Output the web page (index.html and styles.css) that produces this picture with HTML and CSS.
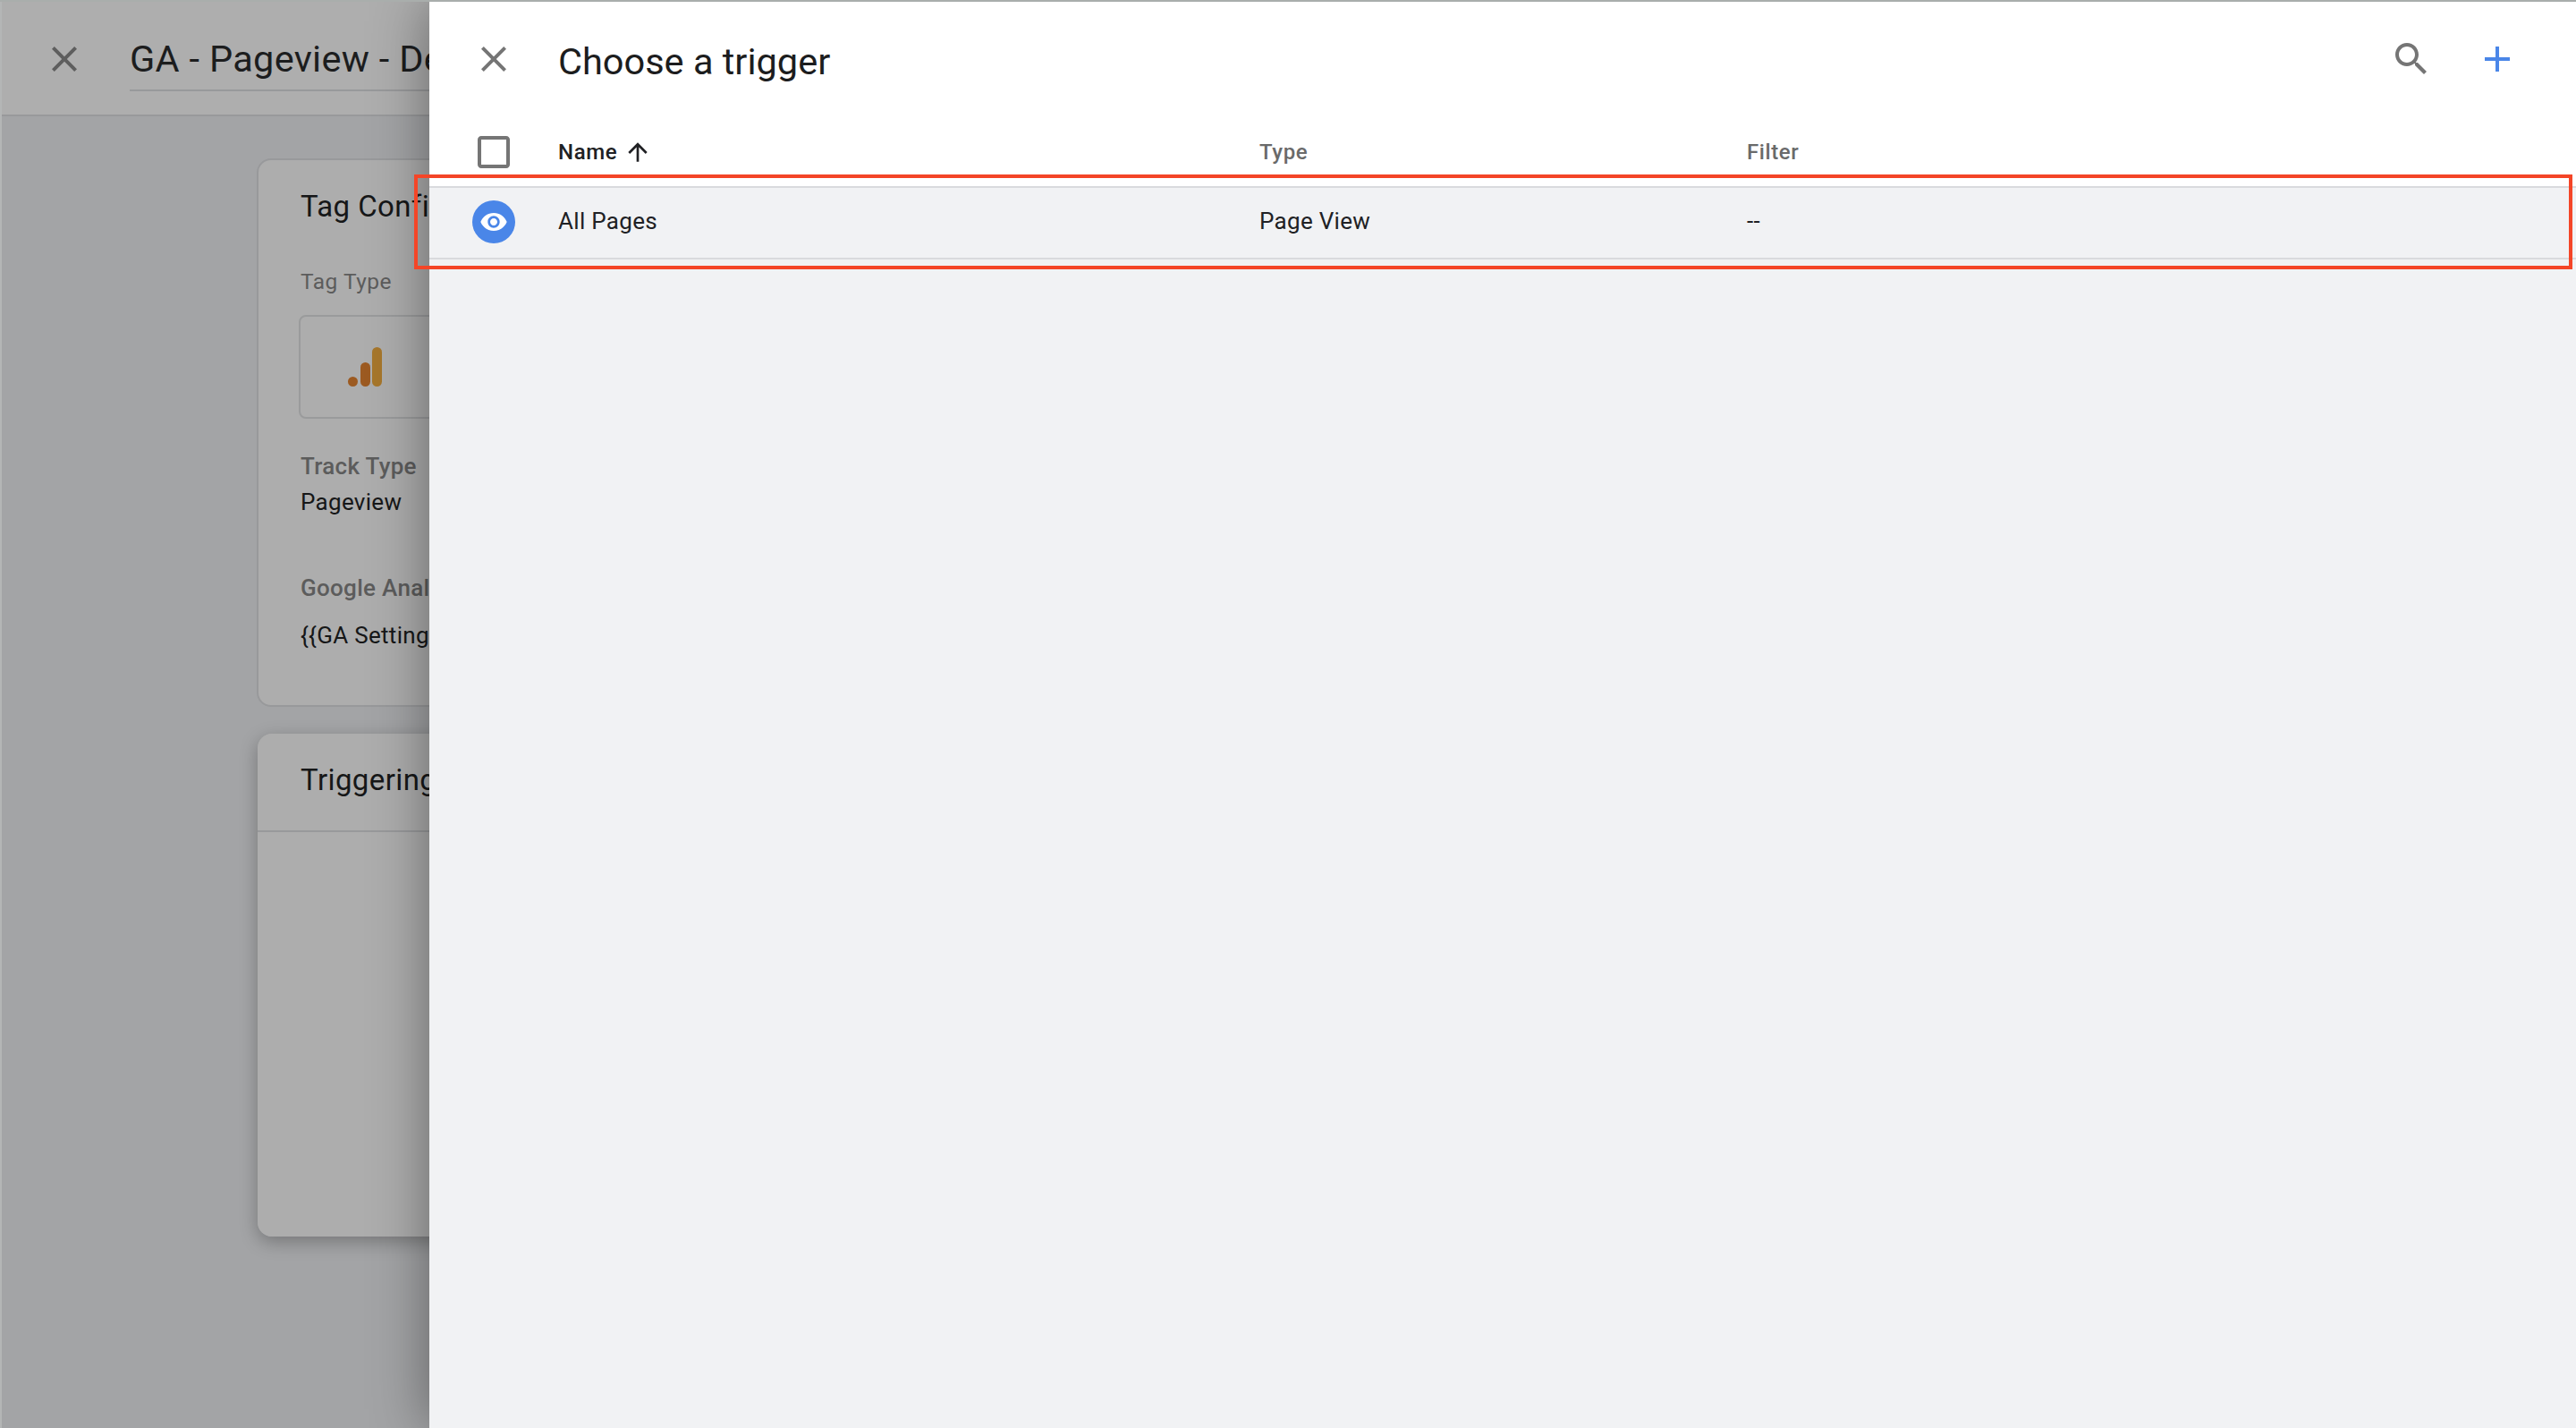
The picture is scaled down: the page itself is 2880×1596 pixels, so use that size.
FILE: index.html
```html
<!DOCTYPE html>
<html lang="en">
<head>
<meta charset="utf-8">
<title>Choose a trigger</title>
<link rel="stylesheet" href="styles.css">
</head>
<body>
<div class="page">
  <header class="page-head">
    <button class="icon-btn dark"><svg viewBox="0 0 24 24"><path d="M19 6.41L17.59 5 12 10.59 6.41 5 5 6.41 10.59 12 5 17.59 6.41 19 12 13.41 17.59 19 19 17.59 13.41 12z"/></svg></button>
    <div class="tag-name">GA - Pageview - Default</div>
  </header>
  <main class="page-main">
    <section class="card config">
      <h2 class="card-title">Tag Configuration</h2>
      <div class="label type-label">Tag Type</div>
      <div class="type-box">
        <svg class="ga-logo" viewBox="0 0 38 44"><circle cx="5.5" cy="38.5" r="5.5" fill="#9c5a21"/><rect x="14" y="17" width="11" height="27" rx="5.5" fill="#9c5a21"/><rect x="27" y="0" width="11" height="44" rx="5.5" fill="#a6762b"/></svg>
      </div>
      <div class="label track-label">Track Type</div>
      <div class="value track-value">Pageview</div>
      <div class="label settings-label">Google Analytics Settings</div>
      <div class="value settings-value">{{GA Settings}}</div>
    </section>
    <section class="card trigger">
      <h2 class="card-title">Triggering</h2>
    </section>
  </main>
</div>
<aside class="panel">
  <div class="panel-head">
    <button class="icon-btn"><svg viewBox="0 0 24 24"><path d="M19 6.41L17.59 5 12 10.59 6.41 5 5 6.41 10.59 12 5 17.59 6.41 19 12 13.41 17.59 19 19 17.59 13.41 12z"/></svg></button>
    <h1 class="panel-title">Choose a trigger</h1>
    <button class="icon-btn"><svg viewBox="0 0 24 24"><path d="M15.5 14h-.79l-.28-.27C15.41 12.59 16 11.11 16 9.5 16 5.91 13.09 3 9.5 3S3 5.91 3 9.5 5.91 16 9.5 16c1.61 0 3.09-.59 4.23-1.57l.27.28v.79l5 4.99L20.49 19l-4.99-5zm-6 0C7.01 14 5 11.99 5 9.5S7.01 5 9.5 5 14 7.01 14 9.5 11.99 14 9.5 14z"/></svg></button>
    <button class="icon-btn blue"><svg viewBox="0 0 24 24"><path d="M19 13h-6v6h-2v-6H5v-2h6V5h2v6h6v2z"/></svg></button>
  </div>
  <div class="table-row table-head">
    <svg class="check" viewBox="0 0 24 24"><path d="M19 5v14H5V5h14m0-2H5c-1.1 0-2 .9-2 2v14c0 1.1.9 2 2 2h14c1.1 0 2-.9 2-2V5c0-1.1-.9-2-2-2z"/></svg>
    <div class="th sorted">Name <svg class="arrow" viewBox="0 0 24 24"><path d="M4 12l1.41 1.41L11 7.83V20h2V7.83l5.58 5.59L20 12l-8-8-8 8z"/></svg></div>
    <div class="th">Type</div>
    <div class="th">Filter</div>
  </div>
  <div class="table-row table-item">
    <span class="eye"><svg viewBox="0 0 24 24"><path d="M12 4.5C7 4.5 2.73 7.61 1 12c1.73 4.39 6 7.5 11 7.5s9.27-3.11 11-7.5c-1.73-4.39-6-7.5-11-7.5zM12 17c-2.76 0-5-2.24-5-5s2.24-5 5-5 5 2.24 5 5-2.24 5-5 5zm0-8c-1.66 0-3 1.34-3 3s1.34 3 3 3 3-1.34 3-3-1.34-3-3-3z"/></svg></span>
    <div class="td td-name">All Pages</div>
    <div class="td">Page View</div>
    <div class="td">--</div>
  </div>
  <div class="panel-rest"></div>
</aside>
<div class="top-strip"></div>
<div class="highlight"></div>
</body>
</html>
```
FILE: styles.css
```css
* { box-sizing: border-box; }
html, body { height: 100%; }
body {
  margin: 0;
  position: relative;
  height: 1596px;
  overflow: hidden;
  background: #a9aeac;
  padding-top: 2px;
  font-family: Roboto, "Liberation Sans", sans-serif;
  color: #161718;
}
button { border: 0; padding: 0; background: none; }
h1, h2 { margin: 0; font-weight: 400; }

.top-strip {
  position: absolute;
  left: 0;
  top: 0;
  right: 0;
  height: 2px;
  background: #a9aeac;
}

.icon-btn { width: 48px; height: 48px; flex: none; fill: #757575; }
.icon-btn svg { display: block; width: 48px; height: 48px; }
.icon-btn.dark { fill: #5e5e5e; }
.icon-btn.blue { fill: #4a86e8; }

.page {
  height: 1594px;
  display: flex;
  flex-direction: column;
  background: #a3a4a6;
  border-left: 2px solid #b4b6b6;
}
.page-head {
  height: 128px;
  flex: none;
  display: flex;
  align-items: flex-start;
  padding: 40px 0 0 46px;
  background: #aeaeae;
  border-bottom: 2px solid #98999b;
}
.tag-name {
  margin: -4px 0 0 49px;
  width: 800px;
  height: 64px;
  font-size: 41.5px;
  line-height: 56px;
  letter-spacing: 0.3px;
  color: #1c1d1e;
  white-space: nowrap;
  border-bottom: 2px solid #98999b;
}
.page-main {
  flex: 1;
  display: flex;
  flex-direction: column;
  padding: 47px 0 0 285px;
  gap: 30px;
}
.card {
  width: 1800px;
  flex: none;
  display: flex;
  flex-direction: column;
  align-items: flex-start;
  background: #adadad;
  border-radius: 16px;
}
.config { height: 613px; border: 2px solid #98999b; padding-left: 47px; }
.trigger {
  height: 562px;
  margin-left: 1px;
  padding-left: 48px;
  background: linear-gradient(#adadad 108px, #98999b 108px, #98999b 110px, #adadad 110px);
  box-shadow: 0 6px 20px rgba(0, 0, 0, 0.28);
}
.card-title { font-size: 33px; line-height: 40px; letter-spacing: 0.4px; margin-top: 32px; white-space: nowrap; }
.label, .value { font-size: 26px; line-height: 32px; letter-spacing: 0.3px; white-space: nowrap; }
.label { color: #5c5c5c; font-weight: 500; }
.type-label { margin-top: 48px; font-weight: 400; font-size: 24.5px; letter-spacing: 0.5px; }
.type-box {
  width: 600px;
  height: 116px;
  margin: 21px 0 0 -2px;
  padding: 34px 0 0 53px;
  border: 2px solid #9a9b9c;
  border-radius: 8px;
}
.ga-logo { display: block; width: 38px; height: 44px; }
.track-label { margin-top: 37px; }
.track-value { margin-top: 8px; }
.settings-label { margin-top: 64px; }
.settings-value { margin-top: 21px; }

.panel {
  position: absolute;
  left: 480px;
  top: 2px;
  right: 0;
  bottom: 0;
  display: flex;
  flex-direction: column;
  background: #fff;
  box-shadow: 0 0 60px rgba(0, 0, 0, 0.42);
}
.panel-head {
  height: 130px;
  flex: none;
  display: flex;
  align-items: flex-start;
  padding: 40px 64px 0 48px;
}
.panel-title {
  flex: 1;
  margin-left: 48px;
  font-size: 41.5px;
  line-height: 54px;
  color: #1c1d1e;
}
.panel-head .icon-btn + .icon-btn { margin-left: 48px; }
.table-row {
  display: grid;
  grid-template-columns: 97px 783px 545px 1fr;
  align-items: center;
  padding-left: 48px;
}
.table-head { height: 76px; }
.check { display: block; width: 48px; height: 48px; fill: #757575; }
.th { font-size: 24px; letter-spacing: 0.6px; color: #6a6a6a; font-weight: 500; }
.sorted { color: #202124; display: flex; align-items: center; margin-left: -1px; }
.arrow { width: 32px; height: 32px; fill: #202124; margin-left: 7px; }
.table-item {
  height: 82px;
  padding-bottom: 2px;
  background: #f1f2f4;
  border-top: 2px solid #d9dadd;
  border-bottom: 2px solid #d9dadd;
}
.eye {
  width: 48px;
  height: 48px;
  border-radius: 50%;
  background: #4a86e8;
  display: flex;
  align-items: center;
  justify-content: center;
  fill: #fff;
}
.eye svg { display: block; width: 32px; height: 32px; }
.td { font-size: 26px; line-height: 30px; letter-spacing: 0.3px; color: #202124; margin-bottom: 2px; }
.td-name { margin-left: -1px; }
.panel-rest { flex: 1; background: #f1f2f4; }

.highlight {
  position: absolute;
  left: 463px;
  top: 195px;
  width: 2413px;
  height: 106px;
  border: 4px solid #f44527;
}
```
